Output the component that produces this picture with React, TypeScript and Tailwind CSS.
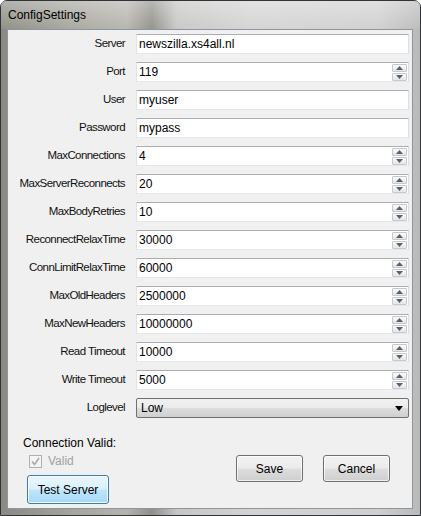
import React from 'react';

const font = { fontFamily: '"Liberation Sans", Arial, sans-serif' };

type Field = { label: string; value: string; spin?: boolean };

const fields: Field[] = [
  { label: 'Server', value: 'newszilla.xs4all.nl' },
  { label: 'Port', value: '119', spin: true },
  { label: 'User', value: 'myuser' },
  { label: 'Password', value: 'mypass' },
  { label: 'MaxConnections', value: '4', spin: true },
  { label: 'MaxServerReconnects', value: '20', spin: true },
  { label: 'MaxBodyRetries', value: '10', spin: true },
  { label: 'ReconnectRelaxTime', value: '30000', spin: true },
  { label: 'ConnLimitRelaxTime', value: '60000', spin: true },
  { label: 'MaxOldHeaders', value: '2500000', spin: true },
  { label: 'MaxNewHeaders', value: '10000000', spin: true },
  { label: 'Read Timeout', value: '10000', spin: true },
  { label: 'Write Timeout', value: '5000', spin: true },
];

function Spinner() {
  return (
    <div className="flex flex-col gap-px mr-px">
      <div className="w-[15px] h-[8px] border border-[#c5c9ce] bg-gradient-to-b from-[#fafafa] to-[#e4e6e9] rounded-[1px] flex items-center justify-center">
        <svg width="7" height="4" viewBox="0 0 7 4"><path d="M0 4L3.5 0L7 4z" fill="#5b5f66" /></svg>
      </div>
      <div className="w-[15px] h-[8px] border border-[#c5c9ce] bg-gradient-to-b from-[#fafafa] to-[#e4e6e9] rounded-[1px] flex items-center justify-center">
        <svg width="7" height="4" viewBox="0 0 7 4"><path d="M0 0L3.5 4L7 0z" fill="#5b5f66" /></svg>
      </div>
    </div>
  );
}

function Row({ label, value, spin }: Field) {
  return (
    <div className="flex items-center h-[20px]">
      <div className="w-[119px] text-right pr-[2px] text-[11.5px] tracking-[-0.05em] text-[#111] whitespace-nowrap">{label}</div>
      <div className="ml-[9px] w-[273px] h-[20px] bg-white border border-[#abadb3] border-l-[#e2e3ea] border-r-[#dbdfe6] border-b-[#e3e9ef] flex items-center">
        <span className="flex-1 pl-[2px] text-[12px] text-black leading-none">{value}</span>
        {spin && <Spinner />}
      </div>
    </div>
  );
}

function WinButton({ children, className }: { children: React.ReactNode; className?: string }) {
  return (
    <button className={`h-[27px] rounded-[3px] border border-[#707070] text-[12px] text-black bg-[linear-gradient(to_bottom,#f2f2f2_0%,#ebebeb_48%,#dddddd_52%,#cfcfcf_100%)] shadow-[inset_0_0_0_1px_rgba(255,255,255,0.7)] ${className ?? ''}`}>
      {children}
    </button>
  );
}

export default function App() {
  return (
    <div style={font} className="w-[421px] h-[516px] overflow-hidden bg-white">
      <div className="w-[421px] h-[516px] flex flex-col rounded-t-[7px] border border-[#30343a] bg-[linear-gradient(to_right,#8b8a82_0%,#a7a69e_18%,#b4b3ac_30%,#8f8e88_36%,#c6c6c4_42%,#d3d3d3_60%,#cfcfcf_90%,#b9b9b9_100%)]">
        <div className="h-[28px] flex items-center pl-[7px] shrink-0 bg-[linear-gradient(to_bottom,rgba(255,255,255,0.35),rgba(255,255,255,0.05))]">
          <span className="text-[12px] text-black">ConfigSettings</span>
        </div>
        <div className="flex-1 ml-[6px] mr-[7px] mb-[6px] border border-[#8d96a0] bg-[#f0f0f0] flex flex-col pt-[4px]">
          <div className="flex flex-col gap-[8px]">
            {fields.map((f) => (
              <Row key={f.label} {...f} />
            ))}
            <div className="flex items-center h-[20px]">
              <div className="w-[119px] text-right pr-[2px] text-[11.5px] tracking-[-0.05em] text-[#111]">Loglevel</div>
              <div className="ml-[9px] w-[273px] h-[20px] rounded-[2px] border border-[#707070] bg-[linear-gradient(to_bottom,#f2f2f2_0%,#ebebeb_48%,#dddddd_52%,#cfcfcf_100%)] flex items-center">
                <span className="flex-1 pl-[4px] text-[12px] text-black">Low</span>
                <svg width="8" height="5" viewBox="0 0 8 5" className="mr-[5px]"><path d="M0 0H8L4 5z" fill="#000" /></svg>
              </div>
            </div>
          </div>
          <div className="flex mt-[18px]">
            <div className="flex flex-col pl-[15px]">
              <span className="text-[12px] text-black leading-[14px]">Connection Valid:</span>
              <div className="flex items-center mt-[4px] pl-[6px] h-[14px]">
                <div className="w-[13px] h-[13px] border border-[#b1b1b1] bg-[#f4f4f4] flex items-center justify-center">
                  <svg width="9" height="9" viewBox="0 0 9 9"><path d="M1 4.5L3.5 7.5L8 1" stroke="#a8a8a8" strokeWidth="1.6" fill="none" /></svg>
                </div>
                <span className="ml-[6px] text-[12px] text-[#a0a0a0]">Valid</span>
              </div>
              <button className="mt-[7px] ml-[4px] w-[82px] h-[29px] rounded-[3px] border border-[#3c7fb1] text-[12px] text-black bg-[linear-gradient(to_bottom,#eaf6fd_0%,#d9f0fc_48%,#bee6fd_52%,#a7d9f5_100%)] shadow-[inset_0_0_0_1px_rgba(255,255,255,0.8)]">
                Test Server
              </button>
            </div>
            <div className="flex gap-[20px] ml-auto mr-[22px] mt-[19px]">
              <WinButton className="w-[67px]">Save</WinButton>
              <WinButton className="w-[67px]">Cancel</WinButton>
            </div>
          </div>
        </div>
      </div>
    </div>
  );
}
